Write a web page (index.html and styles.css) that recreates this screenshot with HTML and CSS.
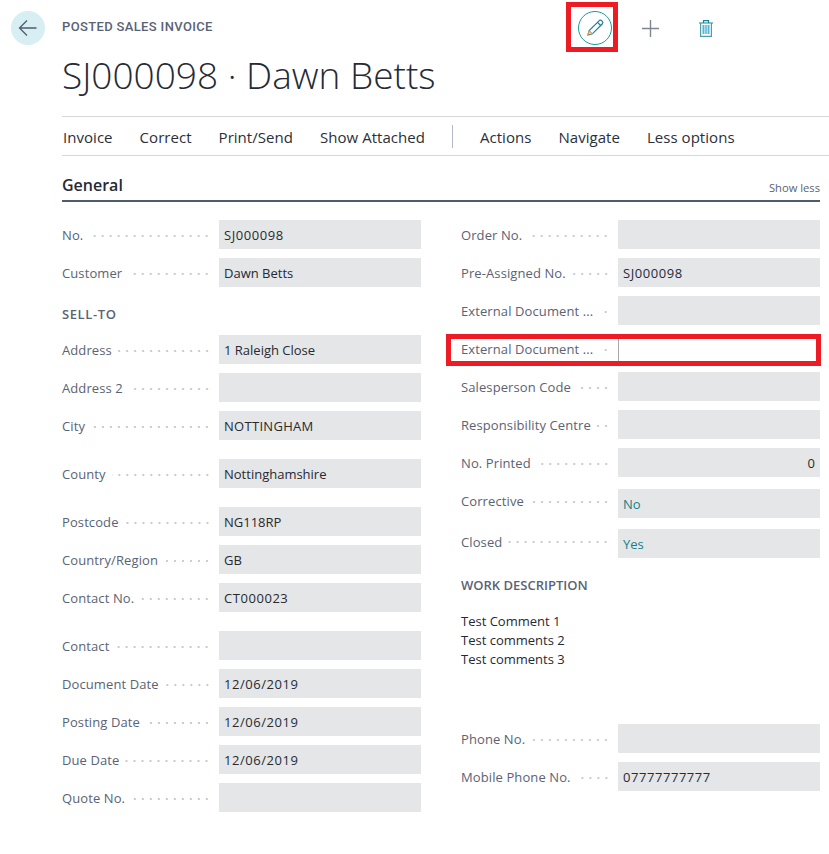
FILE: index.html
```html
<!DOCTYPE html>
<html lang="en">
<head>
    <meta charset="UTF-8">
    <meta name="viewport" content="width=device-width, initial-scale=1.0">
    <title>Posted Sales Invoice</title>
    <link rel="stylesheet" href="styles.css">
</head>
<body>
    <header class="page-head">
        <button class="back-button" aria-label="Back">
            <svg width="20" height="20" viewBox="0 0 20 20"><path d="M18.5 10H1.5M9 2.5L1.5 10L9 17.5" fill="none" stroke="#505c6d" stroke-width="1.3"/></svg>
        </button>
        <div class="head-text">
            <div class="eyebrow">POSTED SALES INVOICE</div>
            <h1>SJ000098 · Dawn Betts</h1>
        </div>
        <div class="head-actions">
            <button class="icon-button edit-button" aria-label="Edit">
                <svg width="34" height="34" viewBox="0 0 34 34">
                    <circle cx="17" cy="17" r="16.5" fill="none" stroke="#1b9aa0"/>
                    <path d="M10 24L11.2 19.6L21 9.8C21.8 9 23 9 23.8 9.8L24.2 10.2C25 11 25 12.2 24.2 13L14.4 22.8Z" fill="none" stroke="#1f7f96" stroke-width="1.2"/>
                    <path d="M11.2 19.6L14.4 22.8M10 24L11.2 19.6" fill="none" stroke="#d99a4e" stroke-width="1.2"/>
                    <path d="M19.5 11.3L22.7 14.5" fill="none" stroke="#1f7f96" stroke-width="1.2"/>
                </svg>
            </button>
            <button class="icon-button plus-button" aria-label="New">
                <svg width="17" height="17" viewBox="0 0 17 17"><path d="M8.5 0V17M0 8.5H17" fill="none" stroke="#7d8594" stroke-width="1.4"/></svg>
            </button>
            <button class="icon-button" aria-label="Delete">
                <svg width="14" height="17" viewBox="0 0 14 17">
                    <path d="M0 3H14M4.5 3V.6H9.5V3" fill="none" stroke="#118a94" stroke-width="1.2"/>
                    <path d="M1.6 3V16.4H12.4V3" fill="none" stroke="#4f9ea6" stroke-width="1.2"/>
                    <rect x="3.5" y="5" width="7" height="9" fill="#4fb6dc"/>
                    <path d="M5.8 5V14M8.2 5V14" stroke="#fff" stroke-width=".8"/>
                </svg>
            </button>
        </div>
    </header>

    <nav class="command-bar">
        <a>Invoice</a>
        <a>Correct</a>
        <a>Print/Send</a>
        <a>Show Attached</a>
        <span class="divider"></span>
        <a>Actions</a>
        <a>Navigate</a>
        <a>Less options</a>
    </nav>

    <div class="section-head">
        <h2>General</h2>
        <a class="show-less">Show less</a>
    </div>

    <div class="columns">
        <div class="column">
            <div class="row"><span class="label">No.</span><span class="leader"></span><span class="field field-code">SJ000098</span></div>
            <div class="row"><span class="label">Customer</span><span class="leader"></span><span class="field">Dawn Betts</span></div>
            <h3 class="group group-sell">SELL-TO</h3>
            <div class="row"><span class="label">Address</span><span class="leader"></span><span class="field">1 Raleigh Close</span></div>
            <div class="row"><span class="label">Address 2</span><span class="leader"></span><span class="field"></span></div>
            <div class="row row-wide"><span class="label">City</span><span class="leader"></span><span class="field field-caps">NOTTINGHAM</span></div>
            <div class="row row-wide"><span class="label">County</span><span class="leader"></span><span class="field">Nottinghamshire</span></div>
            <div class="row"><span class="label">Postcode</span><span class="leader"></span><span class="field">NG118RP</span></div>
            <div class="row"><span class="label">Country/Region</span><span class="leader"></span><span class="field">GB</span></div>
            <div class="row row-wide"><span class="label">Contact No.</span><span class="leader"></span><span class="field field-code">CT000023</span></div>
            <div class="row"><span class="label">Contact</span><span class="leader"></span><span class="field"></span></div>
            <div class="row"><span class="label">Document Date</span><span class="leader"></span><span class="field field-code">12/06/2019</span></div>
            <div class="row"><span class="label">Posting Date</span><span class="leader"></span><span class="field field-code">12/06/2019</span></div>
            <div class="row"><span class="label">Due Date</span><span class="leader"></span><span class="field field-code">12/06/2019</span></div>
            <div class="row"><span class="label">Quote No.</span><span class="leader"></span><span class="field"></span></div>
        </div>
        <div class="column">
            <div class="row"><span class="label">Order No.</span><span class="leader"></span><span class="field"></span></div>
            <div class="row"><span class="label">Pre-Assigned No.</span><span class="leader"></span><span class="field field-code">SJ000098</span></div>
            <div class="row"><span class="label">External Document ...</span><span class="leader"></span><span class="field"></span></div>
            <div class="row row-flagged"><span class="label">External Document ...</span><span class="leader"></span><span class="field field-blank"></span></div>
            <div class="row"><span class="label">Salesperson Code</span><span class="leader"></span><span class="field"></span></div>
            <div class="row"><span class="label">Responsibility Centre</span><span class="leader"></span><span class="field"></span></div>
            <div class="row row-number"><span class="label">No. Printed</span><span class="leader"></span><span class="field field-number">0</span></div>
            <div class="row row-bool row-top"><span class="label">Corrective</span><span class="leader"></span><span class="field field-link">No</span></div>
            <div class="row row-top"><span class="label">Closed</span><span class="leader"></span><span class="field field-link">Yes</span></div>
            <h3 class="group group-work">WORK DESCRIPTION</h3>
            <div class="comments">Test Comment 1<br>Test comments 2<br>Test comments 3</div>
            <div class="row"><span class="label">Phone No.</span><span class="leader"></span><span class="field"></span></div>
            <div class="row"><span class="label">Mobile Phone No.</span><span class="leader"></span><span class="field field-code">07777777777</span></div>
        </div>
    </div>
</body>
</html>
```

FILE: styles.css
```css
*, *::after {
    box-sizing: border-box;
}
body {
    margin: 0;
    font-family: "Open Sans", "Noto Sans", sans-serif;
    font-size: 13px;
    color: #212121;
    background-color: #fff;
}
button {
    border: none;
    padding: 0;
    background: none;
}

/* header */
.page-head {
    display: flex;
    height: 116px;
    padding: 11px 0 0 11px;
}
.back-button {
    display: flex;
    align-items: center;
    justify-content: center;
    width: 34px;
    height: 34px;
    border-radius: 50%;
    background-color: #d7eff2;
}
.head-text {
    margin-left: 17px;
}
.eyebrow {
    margin-top: 8px;
    font-family: Roboto, sans-serif;
    font-size: 13px;
    font-weight: 500;
    line-height: 16px;
    letter-spacing: .35px;
    color: #5a6375;
}
h1 {
    margin: 17px 0 0;
    font-size: 37px;
    font-weight: 300;
    line-height: 46px;
    white-space: nowrap;
    color: #262a33;
}
.head-actions {
    position: absolute;
    top: 11px;
    left: 578px;
    display: flex;
    align-items: center;
    height: 34px;
}
.icon-button {
    display: flex;
    align-items: center;
    justify-content: center;
    height: 34px;
    margin-right: 30px;
}
.plus-button {
    margin-right: 40px;
}
.edit-button {
    position: relative;
}
.edit-button::after {
    content: "";
    position: absolute;
    top: -9px;
    left: -12px;
    width: 52px;
    height: 50px;
    border: 5px solid #ed1c24;
}

/* command bar */
.command-bar {
    display: flex;
    align-items: center;
    gap: 27px;
    height: 40px;
    margin-left: 62px;
    padding: 2px 0 0 1px;
    border-top: 1px solid #d6d8de;
    border-bottom: 1px solid #d6d8de;
    font-size: 15px;
    letter-spacing: .04px;
    color: #2a2f3a;
}
.divider {
    width: 1px;
    height: 23px;
    margin-top: -2px;
    background-color: #b4b8c1;
}

/* section */
.section-head {
    display: flex;
    align-items: flex-end;
    justify-content: space-between;
    height: 46px;
    margin: 0 9px 0 62px;
    padding-bottom: 3px;
    border-bottom: 2px solid #505a6b;
}
h2 {
    margin: 0;
    font-size: 16px;
    font-weight: 600;
    line-height: 24px;
    color: #262a33;
}
.show-less {
    margin-bottom: 2px;
    font-size: 11.2px;
    color: #5a6375;
}

.columns {
    display: grid;
    grid-template-columns: 359px 359px;
    column-gap: 40px;
    margin: 18px 0 0 62px;
}
.row {
    display: flex;
    align-items: center;
    height: 29px;
    margin-bottom: 9px;
    color: #5a6375;
}
.row-wide {
    margin-bottom: 19px;
}
.row-number {
    margin-bottom: 12px;
}
.row-bool {
    margin-bottom: 11px;
}
.row-top {
    align-items: flex-start;
}
.row-top .label {
    margin-top: 3px;
}
.row-top + .row-top .label {
    margin-top: 4px;
}
.row-top .leader {
    margin-top: 12px;
}
.label {
    white-space: nowrap;
    letter-spacing: .1px;
}
.leader {
    flex: 1;
    height: 2px;
    margin: 2px 8px 0 6px;
    background-image: radial-gradient(circle, #c9ccd2 1px, transparent 1px);
    background-size: 8px 2px;
    background-position: right center;
}
.field {
    flex: none;
    width: 202px;
    height: 29px;
    padding: 0 5px;
    line-height: 30px;
    color: #262a33;
    background-color: #e5e6e8;
}
.field-code {
    letter-spacing: .55px;
}
.field-caps {
    letter-spacing: .3px;
}
.field-blank {
    background-color: #fff;
    border-left: 1px solid #a8a8a8;
}
.field-number {
    text-align: right;
}
.field-link {
    color: #12828a;
}
.row-flagged {
    position: relative;
}
.row-flagged::after {
    content: "";
    position: absolute;
    top: 0;
    left: -15px;
    width: 375px;
    height: 32px;
    border: 5px solid #ed1c24;
}
.group {
    margin: 0;
    font-size: 13px;
    font-weight: 600;
    line-height: 18px;
    color: #5a6375;
}
.group-sell {
    margin: 18px 0 12px;
    letter-spacing: .6px;
}
.group-work {
    margin: 18px 0;
}
.comments {
    height: 112px;
    line-height: 19px;
    color: #262a33;
}
```
